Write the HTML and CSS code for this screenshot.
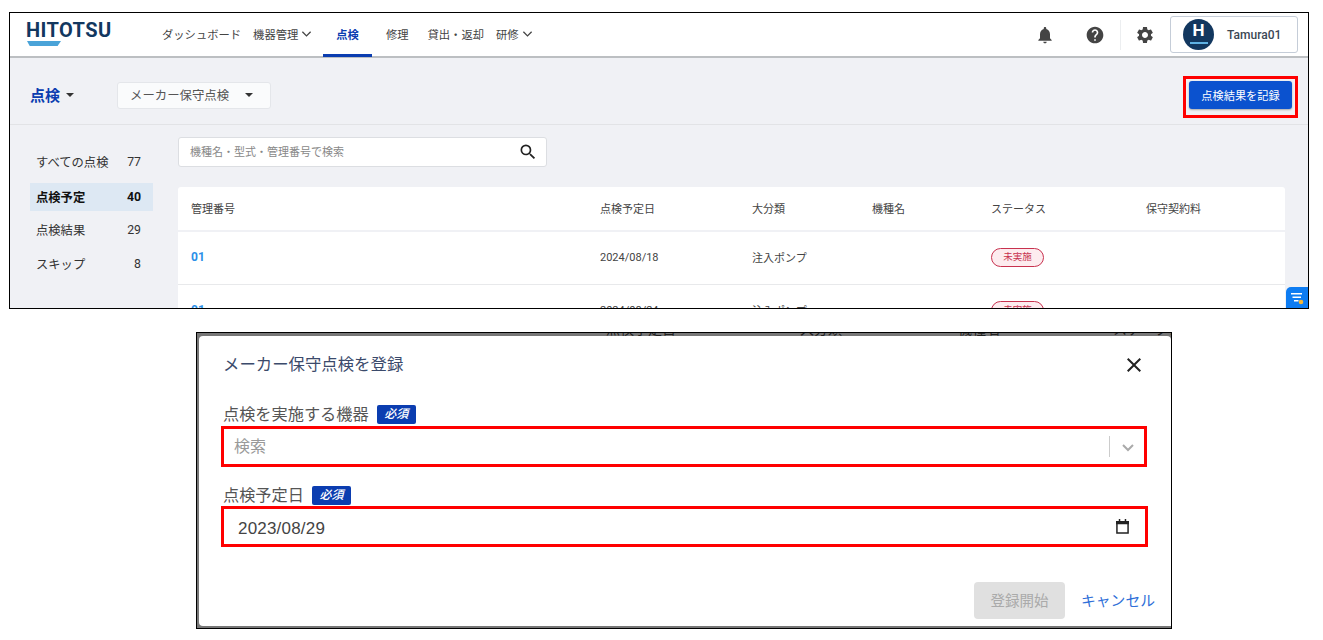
FILE: index.html
```html
<!DOCTYPE html>
<html lang="ja">
<head>
  <meta charset="UTF-8" />
  <title>点検</title>
  <link rel="stylesheet" href="styles.css">
</head>
<body>

  <!-- Inspection list capture -->
  <section class="shot shot-list">
    <header class="topbar">
      <div class="logo">
        <span class="logo-text">HITOTSU</span>
        <span class="logo-bar"></span>
      </div>
      <nav class="nav">
        <a class="nav-item">ダッシュボード</a>
        <a class="nav-item nav-machines">機器管理
          <svg class="chev" viewBox="0 0 12 8"><path d="M1.5 1.5 6 6l4.500-4.500"/></svg>
        </a>
        <a class="nav-item nav-active">点検</a>
        <a class="nav-item nav-repair">修理</a>
        <a class="nav-item nav-rental">貸出・返却</a>
        <a class="nav-item nav-training">研修
          <svg class="chev" viewBox="0 0 12 8"><path d="M1.5 1.5 6 6l4.500-4.500"/></svg>
        </a>
      </nav>
      <div class="top-actions">
        <svg class="top-icon" viewBox="0 0 24 24"><path d="M12 22c1.100 0 2-.9 2-2h-4c0 1.100.9 2 2 2zm6-6v-5c0-3.070-1.630-5.640-4.500-6.320V4c0-.83-.67-1.500-1.500-1.500s-1.500.67-1.500 1.500v.68C7.640 5.360 6 7.920 6 11v5l-2 2v1h16v-1l-2-2z"/></svg>
        <svg class="top-icon icon-help" viewBox="0 0 24 24"><path d="M12 2C6.480 2 2 6.480 2 12s4.480 10 10 10 10-4.480 10-10S17.520 2 12 2zm1 17h-2v-2h2v2zm2.070-7.750l-.9.92C13.450 12.900 13 13.500 13 15h-2v-.5c0-1.100.45-2.100 1.170-2.830l1.240-1.260c.37-.36.59-.86.59-1.410 0-1.100-.9-2-2-2s-2 .9-2 2H8c0-2.210 1.790-4 4-4s4 1.790 4 4c0 .88-.36 1.680-.93 2.250z"/></svg>
        <span class="top-sep"></span>
        <svg class="top-icon" viewBox="0 0 24 24"><path d="M19.140 12.940c.04-.3.06-.61.06-.94 0-.32-.02-.64-.07-.94l2.030-1.580c.18-.14.23-.41.12-.61l-1.920-3.320c-.12-.22-.37-.29-.59-.22l-2.390.96c-.5-.38-1.030-.7-1.620-.94l-.36-2.540c-.04-.24-.24-.41-.48-.41h-3.840c-.24 0-.43.17-.47.41l-.36 2.540c-.59.24-1.130.57-1.620.94l-2.390-.96c-.22-.08-.47 0-.59.22L2.740 8.870c-.12.21-.08.47.12.61l2.030 1.580c-.05.3-.09.63-.09.94s.02.64.07.94l-2.030 1.580c-.18.14-.23.41-.12.61l1.920 3.320c.12.22.37.29.59.22l2.390-.96c.5.38 1.030.7 1.620.94l.36 2.540c.05.24.24.41.48.41h3.840c.24 0 .44-.17.47-.41l.36-2.540c.59-.24 1.130-.56 1.620-.94l2.390.96c.22.08.47 0 .59-.22l1.920-3.320c.12-.22.07-.47-.12-.61l-2.010-1.580zM12 15.600c-1.980 0-3.600-1.620-3.600-3.600s1.620-3.600 3.600-3.600 3.600 1.620 3.600 3.600-1.620 3.600-3.600 3.600z"/></svg>
        <div class="user-box">
          <span class="avatar"><span class="avatar-h">H</span><span class="avatar-bar"></span></span>
          <span class="user-name">Tamura01</span>
        </div>
      </div>
    </header>

    <div class="subbar">
      <div class="page-title">点検<span class="caret caret-title"></span></div>
      <div class="kind-select">メーカー保守点検<span class="caret"></span></div>
      <div class="mark mark-record">
        <button class="record-btn">点検結果を記録</button>
      </div>
    </div>

    <div class="list-body">
      <aside class="side">
        <div class="side-item side-first"><span>すべての点検</span><span>77</span></div>
        <div class="side-item side-active"><span>点検予定</span><span>40</span></div>
        <div class="side-item"><span>点検結果</span><span>29</span></div>
        <div class="side-item side-last"><span>スキップ</span><span>8</span></div>
      </aside>
      <div class="list-main">
        <div class="search">
          <span class="search-text">機種名・型式・管理番号で検索</span>
          <svg class="search-icon" viewBox="0 0 24 24"><path d="M15.500 14h-.79l-.28-.27A6.471 6.471 0 0 0 16 9.500 6.500 6.500 0 1 0 9.500 16c1.610 0 3.090-.59 4.230-1.570l.27.28v.79l5 4.990L20.490 19l-4.990-5zm-6 0C7.010 14 5 11.990 5 9.500S7.010 5 9.500 5 14 7.010 14 9.500 11.990 14 9.500 14z"/></svg>
        </div>
        <table class="list-table">
          <colgroup>
            <col class="col-no"><col class="col-date"><col class="col-cat"><col class="col-model"><col class="col-status"><col class="col-fee">
          </colgroup>
          <thead>
            <tr><th>管理番号</th><th>点検予定日</th><th>大分類</th><th>機種名</th><th>ステータス</th><th>保守契約料</th></tr>
          </thead>
          <tbody>
            <tr><td><a class="row-link">01</a></td><td>2024/08/18</td><td>注入ポンプ</td><td></td><td><span class="badge">未実施</span></td><td></td></tr>
            <tr><td><a class="row-link">01</a></td><td>2024/08/24</td><td>注入ポンプ</td><td></td><td><span class="badge">未実施</span></td><td></td></tr>
          </tbody>
        </table>
      </div>
    </div>

    <!-- Floating side tab -->
    <div class="float-tab">
      <svg viewBox="0 0 14 14"><path d="M1 2h11v1.500H1zM2.500 5.500H11V7H2.500zM4 9h4.500v1.500H4z" fill="#fff"/><circle cx="11" cy="11" r="2.300" fill="#f5b73a"/></svg>
    </div>
  </section>

  <!-- Register dialog capture -->
  <section class="shot shot-dialog">
    <div class="dim-strip">
      <span class="dim-a">点検予定日</span>
      <span class="dim-b">大分類</span>
      <span class="dim-c">機種名</span>
      <span class="dim-d">ステータス</span>
    </div>
    <div class="dialog">
      <div class="dialog-head">
        <h2 class="dialog-title">メーカー保守点検を登録</h2>
        <svg class="close-icon" viewBox="0 0 24 24"><path d="M19 6.410 17.590 5 12 10.590 6.410 5 5 6.410 10.590 12 5 17.590 6.410 19 12 13.410 17.590 19 19 17.590 13.410 12z"/></svg>
      </div>

      <div class="field-label"><span class="label-text">点検を実施する機器</span><span class="required">必須</span></div>
      <div class="mark mark-field">
        <div class="field-box">
          <span class="placeholder">検索</span>
          <span class="field-sep"></span>
          <svg class="field-chev" viewBox="0 0 20 20"><path d="M5 8l5 5 5-5"/></svg>
        </div>
      </div>

      <div class="field-label label-date"><span class="label-text">点検予定日</span><span class="required">必須</span></div>
      <div class="mark mark-field mark-date">
        <div class="field-box date-box">
          <span class="date-value">2023/08/29</span>
          <svg class="cal-icon" viewBox="0 0 14 16"><path d="M1 4.500h12V15H1z" fill="none" stroke="#222" stroke-width="1.600"/><path d="M0 2h14v3.500H0zM3 0h1.600v3H3zM9.400 0H11v3H9.400z" fill="#222"/></svg>
        </div>
      </div>

      <div class="dialog-foot">
        <button class="start-btn" disabled>登録開始</button>
        <a class="cancel-link">キャンセル</a>
      </div>
    </div>
  </section>

</body>
</html>
```

FILE: styles.css
```css
* {
  box-sizing: border-box;
}

body {
  margin: 0;
  background: #fff;
  color: #333;
  font-family: Roboto, "Noto Sans CJK JP", sans-serif;
}

.shot {
  position: relative;
  height: 297px;
  border: 1px solid #000;
  overflow: hidden;
}

.shot-list {
  width: 1300px;
  margin: 12px 0 0 9px;
  background: #f0f1f5;
}

.shot-dialog {
  width: 976px;
  margin: 23px 0 0 196px;
  background: #777;
  padding-left: 2px;
}

/* top bar */
.topbar {
  display: flex;
  align-items: center;
  height: 45px;
  padding: 0 10px 0 16px;
  background: #fff;
  border-bottom: 2px solid #bcbfc2;
}

.logo {
  display: flex;
  flex-direction: column;
  width: 136px;
  margin-top: -3px;
}

.logo-text {
  color: #12375f;
  font-size: 20px;
  font-weight: 700;
  line-height: 20px;
  letter-spacing: 0.4px;
}

.logo-bar {
  width: 34px;
  height: 5px;
  margin: 1px 0 0 1px;
  background: #4aa3d8;
  clip-path: polygon(0 0, 100% 0, 90% 100%, 8% 100%);
}

.nav {
  display: flex;
  align-self: stretch;
  align-items: center;
  padding-bottom: 2px;
  font-size: 11.300px;
  color: #444;
}

.nav-item {
  display: flex;
  align-items: center;
  white-space: nowrap;
}

.nav-machines {
  margin-left: 12px;
}

.nav-active {
  align-self: stretch;
  margin-left: 11px;
  margin-bottom: -3px;
  padding: 0 13px;
  color: #0b3db0;
  font-weight: 700;
  border-bottom: 3px solid #0b3db0;
}

.nav-repair {
  margin-left: 14px;
}

.nav-rental {
  margin-left: 19px;
}

.nav-training {
  margin-left: 12px;
}

.chev {
  width: 11px;
  height: 8px;
  margin-left: 3px;
  fill: none;
  stroke: #444;
  stroke-width: 1.400;
}

.top-actions {
  display: flex;
  align-items: center;
  margin-left: auto;
}

.top-icon {
  width: 20px;
  height: 20px;
  fill: #444;
}

.icon-help {
  margin-left: 30px;
}

.top-sep {
  width: 1px;
  height: 30px;
  margin: 0 14px 0 15px;
  background: #eceef0;
}

.user-box {
  display: flex;
  align-items: center;
  width: 128px;
  height: 37px;
  margin-left: 15px;
  padding-left: 12px;
  background: #fff;
  border: 1px solid #c5cdd8;
  border-radius: 3px;
}

.avatar {
  display: flex;
  flex-direction: column;
  align-items: center;
  width: 31px;
  height: 31px;
  border-radius: 50%;
  background: #12375f;
}

.avatar-h {
  color: #fff;
  font-size: 17px;
  font-weight: 700;
  line-height: 23px;
}

.avatar-bar {
  width: 18px;
  height: 2px;
  background: #5fb2e4;
}

.user-name {
  margin-left: 13px;
  font-size: 12px;
  font-weight: 500;
  color: #3b4754;
}

/* sub header */
.subbar {
  display: flex;
  align-items: center;
  height: 67px;
  padding: 8px 10px 0 20px;
  border-bottom: 1px solid #e2e3e6;
}

.page-title {
  display: flex;
  align-items: center;
  width: 87px;
  padding-bottom: 2px;
  color: #0b3db0;
  font-size: 15px;
  font-weight: 700;
}

.caret {
  width: 0;
  height: 0;
  border-left: 4px solid transparent;
  border-right: 4px solid transparent;
  border-top: 4px solid #333;
  margin-left: 16px;
}

.caret-title {
  margin-left: 6px;
  margin-top: 2px;
}

.kind-select {
  display: flex;
  align-items: center;
  width: 154px;
  height: 27px;
  padding-left: 12px;
  background: #fafbfc;
  border: 1px solid #e4e6ea;
  border-radius: 3px;
  font-size: 12.400px;
  color: #555;
}

.mark {
  border: 3px solid #f00;
}

.mark-record {
  width: 115px;
  height: 42px;
  margin: 4px 0 0 auto;
  padding: 2px 3px 6px;
}

.record-btn {
  display: block;
  width: 103px;
  height: 28px;
  padding: 0;
  background: #0b52cf;
  color: #fff;
  border: none;
  border-radius: 3px;
  box-shadow: 0 1px 2px rgba(0,0,0,0.3);
  font-family: inherit;
  font-size: 11.200px;
}

/* list */
.list-body {
  display: flex;
}

.side {
  display: flex;
  flex-direction: column;
  gap: 5px;
  width: 123px;
  margin: 22px 25px 0 20px;
}

.side-item {
  display: flex;
  align-items: center;
  justify-content: space-between;
  height: 28px;
  padding: 0 12px 0 6px;
  font-size: 12.300px;
  color: #333;
}

.side-first {
  margin-bottom: 3px;
  padding-left: 7px;
  padding-top: 2px;
}

.side-first span:first-child {
  margin-left: -1px;
}

.side-active {
  background: #dde8f3;
  font-weight: 700;
  color: #111;
}

.side-last {
  padding-top: 2px;
}

.list-main {
  width: 1107px;
  padding-top: 12px;
}

.search {
  display: flex;
  align-items: center;
  justify-content: space-between;
  width: 369px;
  height: 30px;
  padding: 0 8px 0 11px;
  background: #fff;
  border: 1px solid #dcdee2;
  border-radius: 3px;
}

.search-text {
  padding-bottom: 2px;
  font-size: 11px;
  color: #888;
}

.search-icon {
  width: 20px;
  height: 20px;
  fill: #222;
}

.list-table {
  width: 1107px;
  margin-top: 20px;
  background: #fff;
  border-collapse: separate;
  border-spacing: 0;
  border-radius: 3px;
  table-layout: fixed;
  font-size: 11px;
  color: #444;
}

.col-no { width: 409px; }
.col-date { width: 152px; }
.col-cat { width: 120px; }
.col-model { width: 119px; }
.col-status { width: 155px; }
.col-fee { width: 152px; }

.list-table th {
  height: 45px;
  padding: 0 0 2px 13px;
  font-weight: 400;
  text-align: left;
  border-bottom: 2px solid #f0f1f5;
}

.list-table td {
  height: 53px;
  padding: 0 0 2px 13px;
  border-bottom: 1px solid #e8e9eb;
}

.row-link {
  color: #2b8fe8;
  font-size: 12px;
  font-weight: 700;
}

.badge {
  display: inline-block;
  width: 53px;
  height: 19px;
  background: #fdecef;
  border: 1.500px solid #c8324f;
  border-radius: 10px;
  color: #c8324f;
  font-size: 9.500px;
  line-height: 16px;
  text-align: center;
}

.float-tab {
  position: absolute;
  right: 0;
  bottom: 0;
  display: flex;
  align-items: center;
  justify-content: center;
  width: 22px;
  height: 21px;
  background: #0d7cf2;
  border-radius: 5px 0 0 0;
}

.float-tab svg {
  width: 14px;
  height: 14px;
}

/* dialog capture */
.dim-strip {
  display: flex;
  height: 3px;
  padding-left: 407px;
  overflow: hidden;
  font-size: 14px;
  line-height: 14px;
  color: #222;
}

.dim-strip span {
  margin-top: -11px;
  white-space: nowrap;
}

.dim-b { margin-left: 124px; }
.dim-c { margin-left: 116px; }
.dim-d { margin-left: 113px; }

.dialog {
  height: 290px;
  padding-left: 22px;
  background: #fff;
  border-radius: 4px 4px 0 4px;
}

.dialog-head {
  display: flex;
  align-items: center;
  justify-content: space-between;
  height: 56px;
  padding: 0 25px 0 2px;
}

.dialog-title {
  margin: 0;
  padding-bottom: 2px;
  font-size: 16.400px;
  font-weight: 400;
  color: #3b4a6b;
}

.close-icon {
  width: 24px;
  height: 24px;
  margin-top: 2px;
  fill: #222;
}

.field-label {
  display: flex;
  align-items: center;
  height: 19px;
  margin-top: 13px;
  padding-left: 2px;
  font-size: 16.200px;
  color: #555;
}

.label-text {
  margin-top: -4px;
}

.label-date {
  margin-top: 19px;
}

.required {
  width: 39px;
  height: 19px;
  margin-left: 8px;
  background: #0b3db0;
  border-radius: 2px;
  color: #fff;
  font-size: 12px;
  font-style: italic;
  font-weight: 500;
  line-height: 19px;
  text-align: center;
}

.mark-field {
  width: 926px;
  height: 41px;
  margin-top: 2px;
}

.mark-date {
  width: 927px;
  margin-top: 1px;
}

.field-box {
  display: flex;
  align-items: center;
  height: 35px;
  padding: 0 6px 0 10px;
  background: #fff;
  font-size: 16px;
}

.placeholder {
  padding-bottom: 4px;
  color: #999;
}

.field-sep {
  width: 1px;
  height: 21px;
  margin: 0 8px 0 auto;
  background: #ccc;
}

.field-chev {
  width: 20px;
  height: 20px;
  fill: none;
  stroke: #aaa;
  stroke-width: 2;
}

.date-box {
  justify-content: space-between;
  padding: 0 16px 0 14px;
}

.date-value {
  padding-top: 5px;
  color: #444;
  font-family: "Liberation Sans", sans-serif;
  font-size: 17px;
  letter-spacing: 0.2px;
}

.cal-icon {
  width: 13px;
  height: 15px;
}

.dialog-foot {
  display: flex;
  align-items: center;
  justify-content: flex-end;
  gap: 16px;
  margin-top: 35px;
  padding-right: 16px;
}

.start-btn {
  width: 91px;
  height: 37px;
  padding: 0 0 3px;
  background: #e0e0e0;
  color: #aaa;
  border: none;
  border-radius: 4px;
  font-family: inherit;
  font-size: 14.500px;
}

.cancel-link {
  padding-bottom: 3px;
  color: #2f6fd8;
  font-size: 14.800px;
}
```
